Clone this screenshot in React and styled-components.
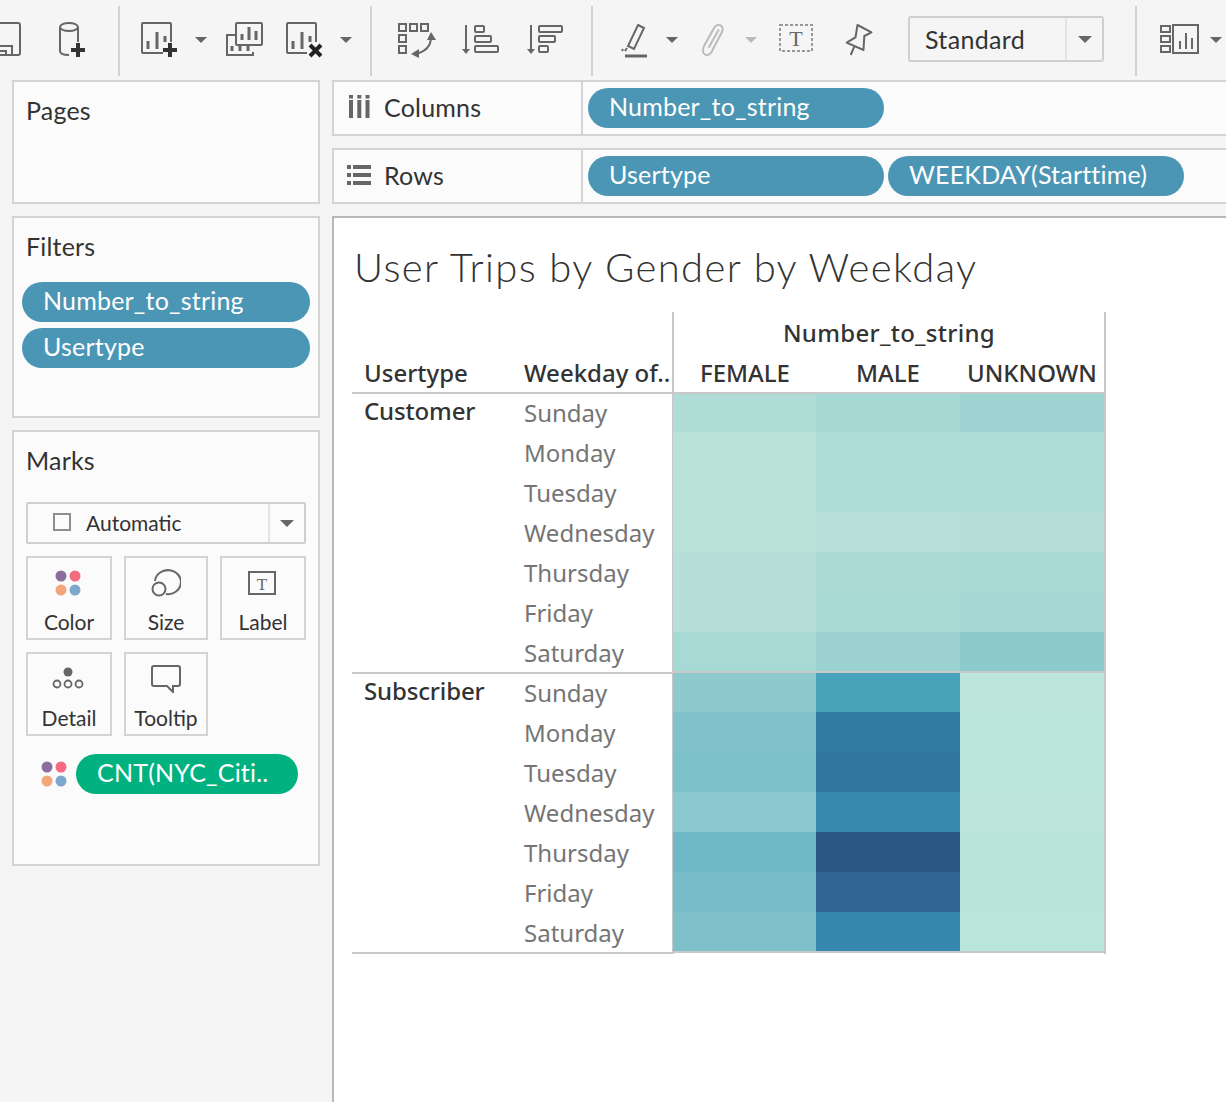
import React from "react";
import styled, { createGlobalStyle } from "styled-components";

const GlobalStyle = createGlobalStyle`
  html, body {
    margin: 0;
    padding: 0;
    background: #f5f5f5;
    overflow: hidden;
  }
  * {
    box-sizing: border-box;
  }
`;

const UI_FONT = `Lato, "Liberation Sans", sans-serif`;
const TABLE_FONT = `"Noto Sans", "Open Sans", sans-serif`;
const ICON = "#666";
const DARK = "#2e2e2e";

const days = ["Sunday", "Monday", "Tuesday", "Wednesday", "Thursday", "Friday", "Saturday"];

const customerCells = [
  ["#b0dcd6", "#a6d8d4", "#9dd3d1"],
  ["#b8e2d8", "#b0dcd7", "#b0dcd7"],
  ["#b8e2d8", "#b0dcd7", "#b0dcd7"],
  ["#b8e2d8", "#b7e1d8", "#b6e0d7"],
  ["#b6e0d7", "#acd9d5", "#a9d9d5"],
  ["#b6e0d7", "#a9d9d5", "#a4d7d3"],
  ["#a8dad5", "#9bd2d0", "#8dcacc"],
];

const subscriberCells = [
  ["#8ec9ce", "#47a2ba", "#bce6da"],
  ["#80c2ca", "#327ba0", "#bae5d9"],
  ["#7ec2c9", "#31769c", "#bae5d9"],
  ["#8cc8cf", "#378aac", "#bce6da"],
  ["#6fb8c5", "#2b5985", "#b9e4d9"],
  ["#78bcc7", "#2f6590", "#b9e4d9"],
  ["#7dc0c9", "#3686ad", "#bae5d9"],
];

function Caret({ left, light }) {
  return (
    <Icon $left={left} width="12" height="6" viewBox="0 0 12 6">
      <path d="M0 0h12L6 6z" fill={light ? "#bbb" : ICON} />
    </Icon>
  );
}

function Bars({ x, y }) {
  return (
    <path
      d={`M${x} ${y + 18}v-8M${x + 9} ${y + 18}v-17M${x + 17} ${y + 18}v-13`}
      stroke={ICON}
      strokeWidth="3"
      fill="none"
    />
  );
}

function Plus({ cx, cy }) {
  return (
    <path
      d={`M${cx - 7} ${cy}h14M${cx} ${cy - 7}v14`}
      stroke="#333"
      strokeWidth="4"
      fill="none"
    />
  );
}

function Toolbar() {
  return (
    <Tools>
      <Icon $left={0} width="22" height="36" viewBox="0 0 22 36">
        <g fill="none" stroke={ICON} strokeWidth="2">
          <path d="M0 1h18a2 2 0 0 1 2 2v28a2 2 0 0 1-2 2H0" />
          <path d="M0 24h12v9M0 29h6v4" />
        </g>
      </Icon>
      <Icon $left={36} width="28" height="36" viewBox="0 0 28 36">
        <g fill="none" stroke={ICON} strokeWidth="2">
          <ellipse cx="11" cy="5" rx="9" ry="4" />
          <path d="M2 5v24c0 3 4 4 9 4M20 5v15" />
        </g>
        <Plus cx={20} cy={28} />
      </Icon>
      <Separator $left={32} />
      <Icon $left={21} width="38" height="36" viewBox="0 0 38 36">
        <rect x="1" y="1" width="29" height="30" fill="none" stroke={ICON} strokeWidth="2" rx="1" />
        <Bars x={7} y={9} />
        <rect x="22" y="20" width="16" height="16" fill="#f5f5f5" />
        <Plus cx={29} cy={28} />
      </Icon>
      <Caret left={16} />
      <Icon $left={19} width="37" height="36" viewBox="0 0 37 36">
        <path d="M9 13H1v20h26v-3" fill="none" stroke={ICON} strokeWidth="2" />
        <path d="M6 24v5M14 24v5M22 24v5" stroke={ICON} strokeWidth="3" />
        <rect x="10" y="1" width="26" height="22" rx="1" fill="#f5f5f5" stroke={ICON} strokeWidth="2" />
        <path d="M16 18v-6M23 18v-13M30 18v-9" stroke={ICON} strokeWidth="3" />
      </Icon>
      <Icon $left={23} width="38" height="36" viewBox="0 0 38 36">
        <rect x="1" y="1" width="29" height="30" fill="none" stroke={ICON} strokeWidth="2" rx="1" />
        <Bars x={7} y={9} />
        <rect x="21" y="20" width="17" height="16" fill="#f5f5f5" />
        <path d="M24 23l11 11M35 23l-11 11" stroke="#222" strokeWidth="4" fill="none" />
      </Icon>
      <Caret left={16} />
      <Separator $left={18} />
      <Icon $left={26} width="37" height="36" viewBox="0 0 37 36">
        <g fill="none" stroke={ICON} strokeWidth="2">
          <rect x="1" y="2" width="7" height="7" />
          <rect x="12" y="2" width="7" height="7" />
          <rect x="23" y="2" width="7" height="7" />
          <rect x="1" y="13" width="7" height="7" />
          <rect x="1" y="24" width="7" height="7" />
          <path d="M33 15c0 9-6 15-16 17" />
        </g>
        <path d="M33 10l5 8H29zM13 32l8-5v9z" fill={ICON} />
      </Icon>
      <Icon $left={29} width="35" height="36" viewBox="0 0 35 36">
        <path d="M2 3v26" stroke={ICON} strokeWidth="2" />
        <path d="M-2 27h8l-4 5z" fill={ICON} />
        <g fill="none" stroke={ICON} strokeWidth="2">
          <rect x="11" y="4" width="9" height="6" rx="1" />
          <rect x="11" y="14" width="16" height="6" rx="1" />
          <rect x="11" y="24" width="23" height="6" rx="1" />
        </g>
      </Icon>
      <Icon $left={29} width="35" height="36" viewBox="0 0 35 36">
        <path d="M3 3v26" stroke={ICON} strokeWidth="2" />
        <path d="M-1 27h8l-4 5z" fill={ICON} />
        <g fill="none" stroke={ICON} strokeWidth="2">
          <rect x="11" y="4" width="23" height="6" rx="1" />
          <rect x="11" y="14" width="16" height="6" rx="1" />
          <rect x="11" y="24" width="9" height="6" rx="1" />
        </g>
      </Icon>
      <Separator $left={28} />
      <Icon $left={28} width="26" height="36" viewBox="0 0 26 36">
        <path d="M17 3l6 3-10 21-6-3z" fill="none" stroke={ICON} strokeWidth="2" />
        <path d="M6 26l-2 3M2 27l-1 2" stroke={ICON} strokeWidth="2" />
        <path d="M4 34h22" stroke={ICON} strokeWidth="3" />
      </Icon>
      <Caret left={19} />
      <Icon $left={22} width="25" height="36" viewBox="0 0 25 36">
        <path
          d="M13 27L22 10C24 5 21 3 18.5 3C16 3 14.5 5 13.5 7L3.5 25C1.5 30 4 33 7 33C10 33 11.5 31 13 27M18.5 8L9 25"
          fill="none"
          stroke="#bbb"
          strokeWidth="2"
          strokeLinecap="round"
        />
      </Icon>
      <Caret left={20} light />
      <Icon $left={22} width="34" height="36" viewBox="0 0 34 36">
        <rect x="1" y="3" width="32" height="26" fill="none" stroke="#999" strokeWidth="2" strokeDasharray="3 2" />
        <text x="17" y="24" textAnchor="middle" fontFamily="'Liberation Serif', serif" fontSize="22" fill={ICON}>
          T
        </text>
      </Icon>
      <Icon $left={32} width="28" height="36" viewBox="0 0 28 36">
        <path
          d="M12.5 3L26.5 10.3L19.3 14L18.5 28L1.7 20.7L10.5 15.3zM9.3 24.7L5.7 33"
          fill="none"
          stroke={ICON}
          strokeWidth="2"
          strokeLinejoin="round"
        />
      </Icon>
      <ModeSelect>
        <ModeName>Standard</ModeName>
        <ModeArrow>
          <Icon $left={0} width="14" height="7" viewBox="0 0 14 7">
            <path d="M0 0h14L7 7z" fill={ICON} />
          </Icon>
        </ModeArrow>
      </ModeSelect>
      <Separator $left={31} />
      <Icon $left={23} width="39" height="36" viewBox="0 0 39 36">
        <g fill="none" stroke={ICON} strokeWidth="2">
          <rect x="1" y="4" width="9" height="6" />
          <rect x="1" y="14" width="9" height="6" />
          <rect x="1" y="24" width="9" height="6" />
          <rect x="13" y="3" width="25" height="28" />
        </g>
        <path d="M20 27v-8M26 27v-16M32 27v-11" stroke={ICON} strokeWidth="2" />
      </Icon>
      <Caret left={11} />
    </Tools>
  );
}

function Palette() {
  return (
    <svg width="26" height="26" viewBox="0 0 26 26">
      <circle cx="6" cy="6" r="5.5" fill="#8a6f9c" />
      <circle cx="20" cy="6" r="5.5" fill="#f46a80" />
      <circle cx="6" cy="20" r="5.5" fill="#f3a67c" />
      <circle cx="20" cy="20" r="5.5" fill="#7fa6cc" />
    </svg>
  );
}

function HeatGroup({ cells, top }) {
  return (
    <HeatGrid $top={top}>
      {cells.flat().map((color, index) => (
        <HeatCell key={index} $color={color} />
      ))}
    </HeatGrid>
  );
}

function RowGroup({ name }) {
  return (
    <GroupRow>
      <GroupName>{name}</GroupName>
      <DayList>
        {days.map((day) => (
          <Day key={day}>{day}</Day>
        ))}
      </DayList>
    </GroupRow>
  );
}

export default function App() {
  return (
    <Page>
      <GlobalStyle />
      <Toolbar />
      <Body>
        <Sidebar>
          <Card $height={124}>
            <CardTitle>Pages</CardTitle>
          </Card>
          <Card $height={202}>
            <CardTitle>Filters</CardTitle>
            <FilterPills>
              <Pill $width={288}>Number_to_string</Pill>
              <Pill $width={288}>Usertype</Pill>
            </FilterPills>
          </Card>
          <Card $height={436}>
            <CardTitle>Marks</CardTitle>
            <MarkType>
              <MarkTypeName>
                <Checkbox />
                Automatic
              </MarkTypeName>
              <MarkTypeArrow>
                <svg width="14" height="7" viewBox="0 0 14 7">
                  <path d="M0 0h14L7 7z" fill={ICON} />
                </svg>
              </MarkTypeArrow>
            </MarkType>
            <MarkButtons>
              <MarkButton>
                <MarkIcon $shift={3}>
                  <Palette />
                </MarkIcon>
                Color
              </MarkButton>
              <MarkButton>
                <MarkIcon>
                  <svg width="30" height="28" viewBox="0 0 30 28">
                    <g fill="none" stroke={ICON} strokeWidth="2">
                      <path d="M4 12a13 12 0 1 1 11 13" />
                      <circle cx="8" cy="20" r="6.5" />
                    </g>
                  </svg>
                </MarkIcon>
                Size
              </MarkButton>
              <MarkButton>
                <MarkIcon $shift={2}>
                  <svg width="30" height="26" viewBox="0 0 30 26">
                    <rect x="2" y="2" width="26" height="22" fill="none" stroke={ICON} strokeWidth="2" />
                    <text x="15" y="20" textAnchor="middle" fontFamily="'Liberation Serif', serif" fontSize="17" fill={ICON}>
                      T
                    </text>
                  </svg>
                </MarkIcon>
                Label
              </MarkButton>
              <MarkButton>
                <MarkIcon $shift={3}>
                  <svg width="32" height="24" viewBox="0 0 32 24">
                    <circle cx="16" cy="5" r="4.5" fill={ICON} />
                    <g fill="none" stroke={ICON} strokeWidth="1.8">
                      <circle cx="5" cy="17" r="3.5" />
                      <circle cx="16" cy="17" r="3.5" />
                      <circle cx="27" cy="17" r="3.5" />
                    </g>
                  </svg>
                </MarkIcon>
                Detail
              </MarkButton>
              <MarkButton>
                <MarkIcon>
                  <svg width="30" height="28" viewBox="0 0 30 28">
                    <path
                      d="M3 1h24a2 2 0 0 1 2 2v16a2 2 0 0 1-2 2h-5v6l-6-6H3a2 2 0 0 1-2-2V3a2 2 0 0 1 2-2z"
                      fill="none"
                      stroke={ICON}
                      strokeWidth="2"
                    />
                  </svg>
                </MarkIcon>
                Tooltip
              </MarkButton>
            </MarkButtons>
            <MarkField>
              <Palette />
              <Pill $width={222} $green>
                CNT(NYC_Citi..
              </Pill>
            </MarkField>
          </Card>
        </Sidebar>
        <Main>
          <Shelf>
            <ShelfLabel>
              <ShelfIcon $lift={1}>
                <svg width="21" height="24" viewBox="0 0 21 24">
                  <path d="M0 0h4v3.500H0zM8.300 0h4v3.500h-4zM16.500 0h4v3.500h-4z" fill={ICON} />
                  <path d="M0 5h4v18H0zM8.300 5h4v18h-4zM16.500 5h4v18h-4z" fill={ICON} />
                </svg>
              </ShelfIcon>
              Columns
            </ShelfLabel>
            <ShelfPills>
              <Pill $width={296}>Number_to_string</Pill>
            </ShelfPills>
          </Shelf>
          <Shelf>
            <ShelfLabel>
              <ShelfIcon $lift={0}>
                <svg width="24" height="20" viewBox="0 0 24 20">
                  <path d="M0 0h4v4H0zM0 8h4v4H0zM0 16h4v4H0z" fill={ICON} />
                  <path d="M6 0h18v4H6zM6 8h18v4H6zM6 16h18v4H6z" fill={ICON} />
                </svg>
              </ShelfIcon>
              Rows
            </ShelfLabel>
            <ShelfPills>
              <Pill $width={296}>Usertype</Pill>
              <Pill $width={296}>WEEKDAY(Starttime)</Pill>
            </ShelfPills>
          </Shelf>
          <Viz>
            <VizTitle>User Trips by Gender by Weekday</VizTitle>
            <Crosstab>
              <RowPane>
                <RowHead>
                  <FieldName>Usertype</FieldName>
                  <FieldName>Weekday of..</FieldName>
                </RowHead>
                <RowGroup name="Customer" />
                <RowGroup name="Subscriber" />
              </RowPane>
              <ColPane>
                <ColHead>
                  <ColTitle>Number_to_string</ColTitle>
                  <ColNames>
                    <ColName>FEMALE</ColName>
                    <ColName>MALE</ColName>
                    <ColName>UNKNOWN</ColName>
                  </ColNames>
                </ColHead>
                <HeatGroup cells={customerCells} top={38} />
                <HeatGroup cells={subscriberCells} top={39} />
              </ColPane>
            </Crosstab>
          </Viz>
        </Main>
      </Body>
    </Page>
  );
}

const Page = styled.div`
  width: 1226px;
  height: 1102px;
  overflow: hidden;
  background: #f5f5f5;
  font-family: ${UI_FONT};
  color: ${DARK};
`;

const Tools = styled.div`
  display: flex;
  align-items: center;
  height: 80px;
  white-space: nowrap;
`;

const Icon = styled.svg`
  flex: none;
  margin-left: ${(p) => p.$left}px;
  overflow: visible;
`;

const Separator = styled.div`
  flex: none;
  width: 2px;
  height: 70px;
  margin-top: 2px;
  margin-left: ${(p) => p.$left}px;
  background: #d2d2d2;
`;

const ModeSelect = styled.div`
  flex: none;
  display: flex;
  width: 196px;
  height: 46px;
  margin-left: 35px;
  margin-bottom: 2px;
  border: 2px solid #cfcfcf;
  border-radius: 3px;
`;

const ModeName = styled.div`
  flex: 1;
  padding-left: 15px;
  font-size: 25px;
  letter-spacing: 0.35px;
  line-height: 42px;
  color: #333;
`;

const ModeArrow = styled.div`
  flex: none;
  display: flex;
  align-items: center;
  justify-content: center;
  width: 37px;
  border-left: 2px solid #e4e4e4;
`;

const Body = styled.div`
  display: flex;
  gap: 12px;
  padding-left: 12px;
`;

const Sidebar = styled.div`
  flex: none;
  display: flex;
  flex-direction: column;
  gap: 12px;
  width: 308px;
`;

const Card = styled.section`
  height: ${(p) => p.$height}px;
  padding: 0 12px 0 8px;
  background: #fbfbfb;
  border: 2px solid #d4d4d4;
`;

const CardTitle = styled.h2`
  margin: 12px 0 0 4px;
  padding-bottom: 2px;
  font-size: 25px;
  letter-spacing: 0.2px;
  line-height: 32px;
  font-weight: 400;
  color: #333;
`;

const FilterPills = styled.div`
  display: flex;
  flex-direction: column;
  gap: 6px;
  margin-top: 18px;
`;

const Pill = styled.div`
  flex: none;
  width: ${(p) => p.$width}px;
  height: 40px;
  padding-left: 21px;
  border-radius: 20px;
  background: ${(p) => (p.$green ? "#02b180" : "#4b96b4")};
  color: #fff;
  font-size: 25px;
  letter-spacing: 0.2px;
  line-height: 37px;
  white-space: nowrap;
`;

const MarkType = styled.div`
  display: flex;
  width: 280px;
  height: 42px;
  margin: 24px 0 0 4px;
  border: 2px solid #cfcfcf;
  border-radius: 2px;
`;

const MarkTypeName = styled.div`
  flex: 1;
  display: flex;
  align-items: center;
  gap: 15px;
  padding: 0 0 2px 25px;
  font-size: 21px;
  color: #333;
`;

const Checkbox = styled.span`
  width: 18px;
  height: 18px;
  border: 2px solid #8e8e8e;
`;

const MarkTypeArrow = styled.div`
  flex: none;
  display: flex;
  align-items: center;
  justify-content: center;
  width: 36px;
  border-left: 2px solid #e4e4e4;
`;

const MarkButtons = styled.div`
  display: grid;
  grid-template-columns: 86px 84px 86px;
  grid-auto-rows: 84px;
  gap: 12px;
  width: 280px;
  margin: 12px 0 0 4px;
`;

const MarkButton = styled.div`
  display: flex;
  flex-direction: column;
  align-items: center;
  border: 2px solid #d4d4d4;
  font-size: 21px;
  line-height: 28px;
  color: #333;
`;

const MarkIcon = styled.div`
  flex: none;
  display: flex;
  align-items: center;
  justify-content: center;
  height: 50px;
  margin-right: ${(p) => p.$shift || 0}px;
`;

const MarkField = styled.div`
  display: flex;
  align-items: center;
  gap: 9px;
  margin: 18px 0 0 19px;
`;

const Main = styled.div`
  flex: 1;
  min-width: 0;
  display: flex;
  flex-direction: column;
  gap: 12px;
`;

const Shelf = styled.div`
  display: flex;
  height: 56px;
  background: #fbfbfb;
  border: 2px solid #d4d4d4;
  border-right: none;
`;

const ShelfLabel = styled.div`
  flex: none;
  display: flex;
  align-items: center;
  width: 249px;
  padding-bottom: 2px;
  border-right: 2px solid #d4d4d4;
  font-size: 25px;
  letter-spacing: 0.2px;
  color: #333;
`;

const ShelfIcon = styled.div`
  flex: none;
  display: flex;
  align-items: center;
  justify-content: center;
  width: 50px;
  margin-bottom: ${(p) => p.$lift}px;
`;

const ShelfPills = styled.div`
  display: flex;
  align-items: center;
  gap: 4px;
  padding-left: 5px;
`;

const Viz = styled.div`
  height: 886px;
  background: #fff;
  border-left: 2px solid #b8b8b8;
  border-top: 2px solid #b8b8b8;
`;

const VizTitle = styled.h1`
  margin: 24px 0 0 20px;
  font-size: 40px;
  letter-spacing: 1.38px;
  line-height: 50px;
  font-weight: 300;
  color: #333;
`;

const Crosstab = styled.div`
  display: flex;
  margin: 20px 0 0 18px;
  font-family: ${TABLE_FONT};
`;

const RowPane = styled.div`
  flex: none;
  width: 320px;
`;

const RowHead = styled.div`
  display: flex;
  align-items: flex-end;
  height: 82px;
  padding-bottom: 1px;
  border-bottom: 2px solid #c8c8c8;
`;

const FieldName = styled.div`
  flex: none;
  width: 160px;
  padding-left: 12px;
  font-size: 24px;
  line-height: 36px;
  font-weight: 500;
  color: #333;
  white-space: nowrap;
`;

const GroupRow = styled.div`
  display: flex;
  height: 280px;
  border-bottom: 2px solid #c8c8c8;
`;

const GroupName = styled.div`
  flex: none;
  width: 160px;
  margin-top: -1px;
  padding-left: 12px;
  font-size: 24px;
  letter-spacing: -0.15px;
  line-height: 36px;
  font-weight: 500;
  color: #333;
`;

const DayList = styled.div`
  display: grid;
  grid-auto-rows: 40px;
  height: 279px;
  margin-top: -1px;
`;

const Day = styled.div`
  padding-left: 12px;
  font-size: 24px;
  line-height: 40px;
  color: #757575;
`;

const ColPane = styled.div`
  flex: none;
  width: 434px;
  border-left: 2px solid #c8c8c8;
  border-right: 2px solid #c8c8c8;
`;

const ColHead = styled.div`
  height: 82px;
  border-bottom: 2px solid #c8c8c8;
`;

const ColTitle = styled.div`
  height: 42px;
  font-size: 24px;
  letter-spacing: 0.3px;
  line-height: 42px;
  font-weight: 500;
  text-align: center;
  color: #333;
`;

const ColNames = styled.div`
  display: grid;
  grid-template-columns: 142px 144px 144px;
`;

const ColName = styled.div`
  font-size: 24px;
  line-height: 38px;
  font-weight: 500;
  text-align: center;
  color: #333;
`;

const HeatGrid = styled.div`
  display: grid;
  grid-template-columns: 143px 144px 144px;
  grid-template-rows: ${(p) => p.$top}px repeat(5, 40px) 39px;
  margin-left: -1px;
  border-bottom: 2px solid #c8c8c8;
`;

const HeatCell = styled.div`
  background: ${(p) => p.$color};
`;
